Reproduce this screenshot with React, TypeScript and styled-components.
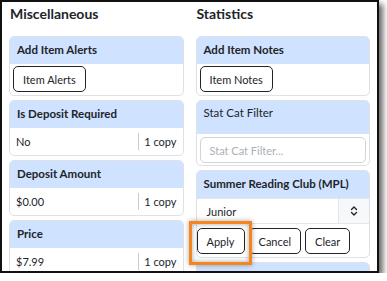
import React from 'react'
import styled, { createGlobalStyle } from 'styled-components'

const GlobalStyle = createGlobalStyle`
  html, body {
    margin: 0;
    padding: 0;
    background: #fff;
  }
  body {
    font-family: Lato, 'Noto Sans', sans-serif;
    color: #212529;
  }
  * {
    box-sizing: border-box;
  }
`

const Frame = styled.div`
  position: relative;
  width: 379px;
  height: 273px;
  border: 2px solid #111;
  box-shadow: 4px 4px 6px rgba(0, 0, 0, 0.6);
  overflow: hidden;
  background: #fff;
`
const Columns = styled.div`
  display: grid;
  grid-template-columns: 1fr 1fr;
  column-gap: 12px;
  padding: 0 7px;
`
const Column = styled.div`
  display: flex;
  flex-direction: column;
  min-width: 0;
`
const Heading = styled.h2`
  margin: 0 0 10px;
  font-size: 14px;
  font-weight: 700;
  line-height: 24px;
  padding-left: 1px;
`
const Stack = styled.div`
  display: flex;
  flex-direction: column;
  gap: 4px;
`
const Card = styled.div`
  border: 1px solid #dee2e6;
  border-radius: 5px;
  overflow: hidden;
  background: #fff;
`
const CardHeader = styled.div`
  display: flex;
  align-items: ${({ $tall }: HeaderProps) => ($tall ? 'flex-start' : 'center')};
  height: ${({ $tall }) => ($tall ? '33px' : '27px')};
  padding: ${({ $tall }) => ($tall ? '5px 7px 0' : '0 7px 2px')};
  background: #cfe2ff;
  font-size: 11.5px;
  font-weight: ${({ $tall }) => ($tall ? 400 : 700)};
`
const ButtonBody = styled.div`
  display: flex;
  padding: 2px 3px 3px;
`
const Button = styled.button`
  height: 26px;
  padding: 0 9px;
  border: 1px solid #212529;
  border-radius: 5px;
  background: #fff;
  color: #212529;
  font-family: inherit;
  font-size: 11px;
`
const ValueRow = styled.div`
  display: flex;
  align-items: center;
  height: 27px;
  font-size: 11px;
`
const Value = styled.span`
  flex: 1;
  padding-left: 6px;
`
const Copies = styled.span`
  display: flex;
  align-items: center;
  height: 17px;
  padding: 0 6px 0 5px;
  border-left: 1px solid #c8ccd0;
`
const FilterBody = styled.div`
  padding: 3px 3px 2px;
`
const Input = styled.input`
  display: block;
  width: 100%;
  height: 26px;
  padding: 0 9px;
  border: 1px solid #ced4da;
  border-radius: 5px;
  font-family: inherit;
  font-size: 11px;
  color: #212529;
  &::placeholder {
    color: #aab0b6;
  }
`
const Select = styled.div`
  display: flex;
  height: 26px;
  border-top: 1px solid #e3e6e9;
  border-bottom: 1px solid #e3e6e9;
  font-size: 11px;
`
const SelectValue = styled.span`
  flex: 1;
  display: flex;
  align-items: center;
  padding-left: 10px;
`
const Spinner = styled.span`
  display: flex;
  align-items: center;
  justify-content: center;
  width: 31px;
  border-left: 1px solid #e3e6e9;
  background: #f7f8f9;
`
const Actions = styled.div`
  display: flex;
  gap: 4px;
  padding: 4px 0 3px;
`
const Highlight = styled.div`
  position: absolute;
  left: 187px;
  top: 219px;
  width: 63px;
  height: 44px;
  border: 3px solid #f5851f;
  box-shadow: 0 0 5px rgba(0, 0, 0, 0.35), inset 0 0 5px rgba(0, 0, 0, 0.35);
  pointer-events: none;
`

const SpinnerIcon = () => (
  <svg width="8" height="12" viewBox="0 0 8 12" fill="none">
    <path d="M1.5 4.5 L4 2 L6.5 4.5" stroke="#212529" strokeWidth="1.4" strokeLinecap="round" strokeLinejoin="round" />
    <path d="M1.5 7.5 L4 10 L6.5 7.5" stroke="#212529" strokeWidth="1.4" strokeLinecap="round" strokeLinejoin="round" />
  </svg>
)

const copyFields = [
  { label: 'Is Deposit Required', value: 'No' },
  { label: 'Deposit Amount', value: '$0.00' },
  { label: 'Price', value: '$7.99' },
]

const App = () => {
  return (
    <>
      <GlobalStyle />
      <Frame>
        <Columns>
          <Column>
            <Heading>Miscellaneous</Heading>
            <Stack>
              <Card>
                <CardHeader>Add Item Alerts</CardHeader>
                <ButtonBody>
                  <Button>Item Alerts</Button>
                </ButtonBody>
              </Card>
              {copyFields.map((field) => (
                <Card key={field.label}>
                  <CardHeader>{field.label}</CardHeader>
                  <ValueRow>
                    <Value>{field.value}</Value>
                    <Copies>1 copy</Copies>
                  </ValueRow>
                </Card>
              ))}
            </Stack>
          </Column>
          <Column>
            <Heading>Statistics</Heading>
            <Stack>
              <Card>
                <CardHeader>Add Item Notes</CardHeader>
                <ButtonBody>
                  <Button>Item Notes</Button>
                </ButtonBody>
              </Card>
              <Card>
                <CardHeader $tall>Stat Cat Filter</CardHeader>
                <FilterBody>
                  <Input placeholder="Stat Cat Filter..." />
                </FilterBody>
              </Card>
              <Card>
                <CardHeader>Summer Reading Club (MPL)</CardHeader>
                <Select>
                  <SelectValue>Junior</SelectValue>
                  <Spinner>
                    <SpinnerIcon />
                  </Spinner>
                </Select>
                <Actions>
                  <Button>Apply</Button>
                  <Button>Cancel</Button>
                  <Button>Clear</Button>
                </Actions>
              </Card>
              <Card>
                <CardHeader />
              </Card>
            </Stack>
          </Column>
        </Columns>
        <Highlight />
      </Frame>
    </>
  )
}

type HeaderProps = {
  $tall?: boolean
}

export default App
